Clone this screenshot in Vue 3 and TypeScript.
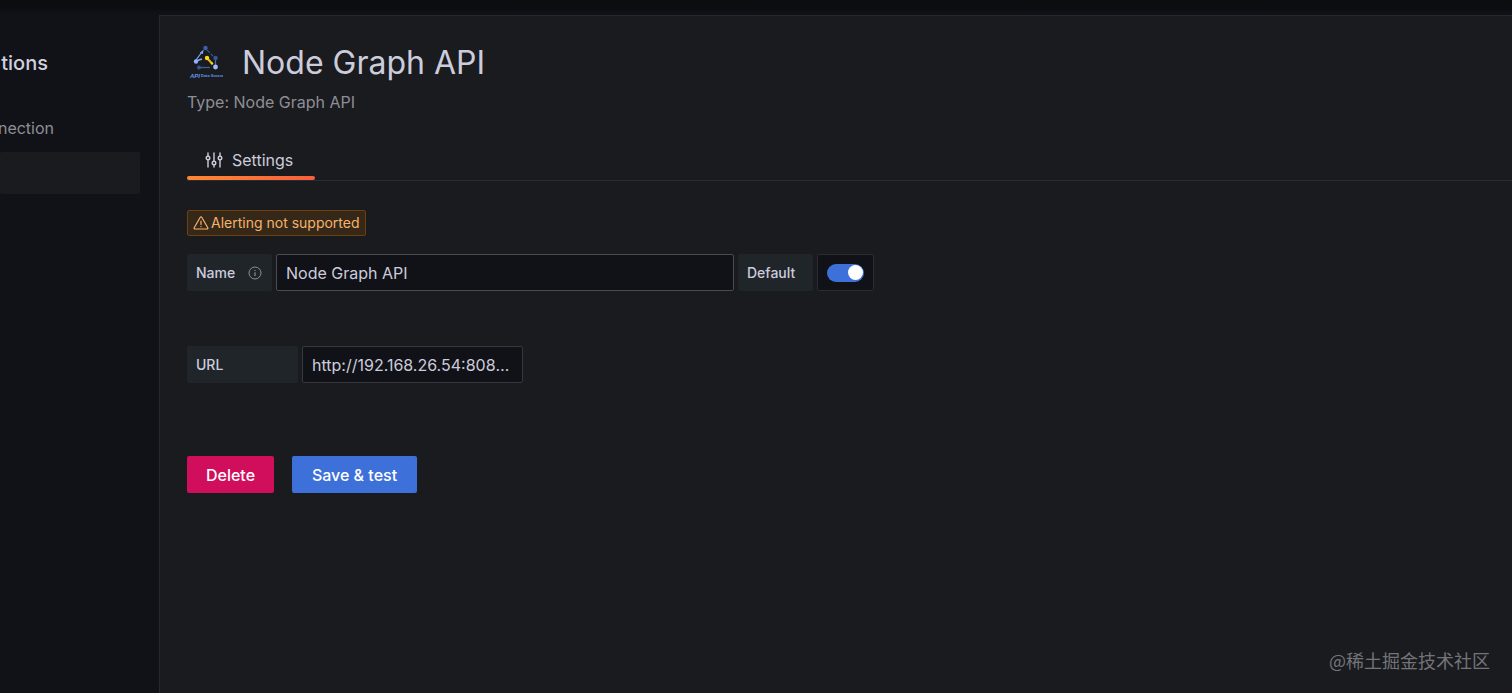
<script setup lang="ts">
import { ref } from 'vue'

const name = ref('Node Graph API')
const url = ref('http://192.168.26.54:8080/api')
const isDefault = ref(true)
</script>

<template>
  <div class="shell">
    <nav class="sidebar" aria-label="Section">
      <h2 class="section-title"><span>tions</span></h2>
      <a class="nav-link" href="#"><span>nection</span></a>
      <div class="nav-active"></div>
    </nav>
    <main class="panel">
      <header class="header">
        <svg class="logo" viewBox="0 0 36 36" aria-hidden="true">
          <g fill="none" stroke="#7fa6f5" stroke-width="1.2">
            <path d="M9 15 15 7" />
            <path d="M13.200 8.200 15.800 6 15.200 9" />
            <path d="M20 5 26 11" stroke="#345797" stroke-dasharray="4 1.500" />
            <path d="M9 16 15 14" stroke-width="1.800" />
            <path d="M13 22.500H23" stroke="#3d619f" />
            <path d="M28.500 15V20" stroke="#496eae" />
          </g>
          <path d="M20 13 25 18.500" stroke="#e9bd20" stroke-width="2" />
          <circle cx="18.500" cy="3" r="2.200" fill="#3c62ab" />
          <circle cx="28.500" cy="13" r="2.200" fill="#345797" />
          <circle cx="9" cy="16.500" r="2.200" fill="#8db2ff" />
          <circle cx="12" cy="22.500" r="2" fill="#345797" />
          <circle cx="28.500" cy="22" r="2.400" fill="#9dbcff" />
          <circle cx="20" cy="13" r="2.200" fill="#ffd21c" />
          <circle cx="25" cy="18.500" r="1.200" fill="#ffd21c" />
          <text x="3" y="33" class="logo-api">API</text>
          <text x="14" y="32" class="logo-source">Data Source</text>
        </svg>
        <h1>Node Graph API</h1>
      </header>
      <p class="type">Type: Node Graph API</p>

      <div class="tabs" role="tablist">
        <button class="tab" type="button" role="tab" aria-selected="true">
          <svg width="18" height="18" viewBox="0 0 18 18" fill="none" stroke="currentColor" stroke-width="1.400" stroke-linecap="round" aria-hidden="true">
            <path d="M3 2v3M3 9v7M9 2v8M9 14v2M15 2v3M15 9v7" />
            <circle cx="3" cy="7" r="1.800" /><circle cx="9" cy="12" r="1.800" /><circle cx="15" cy="7" r="1.800" />
          </svg>
          Settings
        </button>
      </div>

      <div class="badge">
        <svg width="16" height="16" viewBox="0 0 16 16" fill="none" stroke="currentColor" stroke-width="1.200" stroke-linejoin="round" stroke-linecap="round" aria-hidden="true">
          <path d="M7.100 2.500 1.200 12.700Q.8 14 2 14H14Q15.200 14 14.800 12.700L8.900 2.500Q8 1.300 7.100 2.500ZM8 6v3.500M8 11.600v.1" />
        </svg>
        <span>Alerting not supported</span>
      </div>

      <form @submit.prevent>
        <div class="row">
          <label class="label name-label" for="name">
            Name
            <svg width="14" height="14" viewBox="0 0 14 14" fill="none" stroke="currentColor" aria-hidden="true">
              <circle cx="7" cy="7" r="6" /><path d="M7 6.200V10M7 4v1" stroke-width="1.200" />
            </svg>
          </label>
          <input id="name" v-model="name" class="field name-field" type="text" />
          <label class="label default-label" for="default">Default</label>
          <div class="switch-box">
            <input id="default" v-model="isDefault" class="switch" type="checkbox" role="switch" />
          </div>
        </div>
        <div class="row url-row">
          <label class="label url-label" for="url">URL</label>
          <input id="url" v-model="url" class="field url-field" type="text" />
        </div>
        <div class="actions">
          <button class="button delete" type="button">Delete</button>
          <button class="button save" type="submit">Save &amp; test</button>
        </div>
      </form>
      <footer class="credit">@稀土掘金技术社区</footer>
    </main>
  </div>
</template>

<style>
body {
  background: #111217;
}
</style>

<style scoped>
.shell,
.shell * {
  box-sizing: border-box;
}
.shell {
  display: flex;
  min-height: 100vh;
  padding-top: 15px;
  background: linear-gradient(#0c0d11 0, #0c0d11 8px, #111217 14px);
  color: #ccccdc;
  font-family: Inter, "Noto Sans CJK SC", sans-serif;
  font-size: 16px;
  line-height: 24px;
}
.sidebar {
  flex: 0 0 159px;
  padding-top: 36px;
  overflow: hidden;
}
.section-title,
.nav-link {
  display: flex;
  justify-content: flex-end;
  color: #d0d0df;
  white-space: nowrap;
}
.section-title {
  width: 48px;
  margin: 0;
  font-size: 20px;
  line-height: 24px;
  font-weight: 500;
}
.nav-link {
  width: 54px;
  margin-top: 41px;
  color: #8d8e96;
  text-decoration: none;
}
.nav-active {
  height: 42px;
  margin: 12px 19px 0 0;
  background: #1a1b1f;
  border-radius: 2px;
}
.panel {
  display: flex;
  flex: 1;
  flex-direction: column;
  min-width: 0;
  padding: 27px 0 20px 27px;
  background: #1a1b1f;
  border: 1px solid #27282d;
  border-right: 0;
  border-bottom: 0;
}
.header {
  display: flex;
  align-items: center;
  gap: 19px;
  height: 40px;
}
.logo {
  width: 36px;
  height: 36px;
}
.logo-api {
  fill: #6694ee;
  font: italic 700 6px "Liberation Sans", sans-serif;
}
.logo-source {
  fill: #6694ee;
  font: 700 4px "Liberation Sans", sans-serif;
}
h1 {
  margin: 0;
  font-size: 32px;
  line-height: 40px;
  font-weight: 400;
}
.type {
  margin: 7px 0 0;
  color: #8d8e96;
}
.tabs {
  display: flex;
  margin-top: 26px;
  border-bottom: 1px solid #2b2c31;
}
.tab {
  position: relative;
  display: flex;
  align-items: center;
  gap: 9px;
  min-width: 128px;
  height: 40px;
  padding: 0 18px;
  border: 0;
  background: none;
  color: #ccccdc;
  font: inherit;
}
.tab::after {
  position: absolute;
  right: 0;
  bottom: 0;
  left: 0;
  height: 4px;
  border-radius: 2px;
  background: linear-gradient(90deg, #ff8833, #f55f3e);
  content: "";
}
.badge {
  display: flex;
  align-items: center;
  align-self: flex-start;
  gap: 2px;
  height: 26px;
  margin-top: 29px;
  padding: 0 5px;
  border: 1px solid #6d400d;
  border-radius: 2px;
  background: #362819;
  color: #f4b36c;
  font-size: 14px;
  line-height: 20px;
}
.row {
  display: flex;
  gap: 4px;
  margin-top: 18px;
}
.url-row {
  margin-top: 55px;
}
.label {
  display: flex;
  align-items: center;
  justify-content: space-between;
  height: 37px;
  padding: 0 9px;
  border-radius: 2px;
  background: #20252a;
  font-size: 14px;
  font-weight: 500;
}
.label svg {
  color: #8d8e96;
}
.name-label {
  width: 85px;
  padding-right: 10px;
}
.default-label {
  width: 75px;
}
.url-label {
  width: 111px;
}
.field {
  height: 37px;
  padding: 0 9px;
  border: 1px solid #36383e;
  border-radius: 2px;
  outline: 0;
  background: #111217;
  color: #ccccdc;
  font: inherit;
  text-overflow: ellipsis;
}
.name-field {
  width: 458px;
  border-color: #4a4b50;
}
.url-field {
  width: 221px;
}
.switch-box {
  display: flex;
  align-items: center;
  justify-content: center;
  width: 57px;
  height: 37px;
  border: 1px solid #2b2c31;
  border-radius: 2px;
  background: #111217;
}
.switch {
  display: flex;
  align-items: center;
  width: 37px;
  height: 18px;
  margin: 0;
  padding: 0 1px;
  appearance: none;
  border-radius: 9px;
  background: #44464c;
}
.switch::before {
  width: 15px;
  height: 15px;
  border-radius: 50%;
  background: #fff;
  content: "";
}
.switch:checked {
  justify-content: flex-end;
  background: #3d71d9;
}
.actions {
  display: flex;
  gap: 18px;
  margin-top: 73px;
}
.button {
  height: 37px;
  padding: 0 18px;
  border: 0;
  border-radius: 2px;
  color: #fff;
  font: inherit;
  font-weight: 500;
}
.delete {
  min-width: 87px;
  background: #d10e5c;
}
.save {
  min-width: 125px;
  background: #3d71d9;
}
.credit {
  margin-top: auto;
  padding-right: 22px;
  color: #737478;
  font-family: "Noto Sans CJK SC", sans-serif;
  font-size: 18px;
  line-height: 26px;
  text-align: right;
}
</style>
